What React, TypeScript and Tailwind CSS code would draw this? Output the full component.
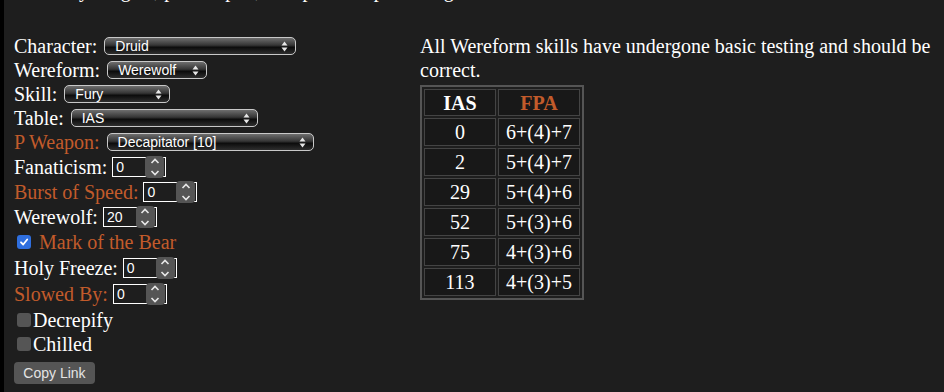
import React from 'react';

const ORANGE = 'text-[#c25b2b]';

function SelectBox({ value, width }: { value: string; width: string }) {
  return (
    <div
      className={`${width} relative flex h-[18px] items-center rounded-[5px] border border-[#c8c8c8] bg-[linear-gradient(to_bottom,#6e6e6e,#353535_45%,#0c0c0c_58%,#2e2e2e)] pl-[10px] font-['Liberation_Sans',sans-serif] text-[14px] leading-none text-white`}
    >
      <span>{value}</span>
      <svg className="absolute right-[7px] top-[3px]" width="7" height="11" viewBox="0 0 7 11">
        <path d="M3.5 0.5 L6.5 4.5 H0.5 Z" fill="#e6e6e6" />
        <path d="M3.5 10.5 L6.5 6.5 H0.5 Z" fill="#e6e6e6" />
      </svg>
    </div>
  );
}

function NumberBox({ value }: { value: string }) {
  return (
    <div className="relative flex h-[20px] w-[54px] items-center border border-white pl-[3px] font-['Liberation_Sans',sans-serif] text-[14px] text-white">
      <span>{value}</span>
      <div className="absolute right-[1px] top-[-2px] flex h-[22px] w-[19px] flex-col items-center justify-between rounded-[4px] bg-[#555555] py-[2px]">
        <svg width="10" height="6" viewBox="0 0 10 6">
          <path d="M1.5 5 L5 1.5 L8.5 5" stroke="#e8e8e8" strokeWidth="1.6" fill="none" />
        </svg>
        <svg width="10" height="6" viewBox="0 0 10 6">
          <path d="M1.5 1 L5 4.5 L8.5 1" stroke="#e8e8e8" strokeWidth="1.6" fill="none" />
        </svg>
      </div>
    </div>
  );
}

function CheckBox({ checked }: { checked: boolean }) {
  return checked ? (
    <div className="flex h-[14px] w-[14px] items-center justify-center rounded-[3px] bg-[#2f6fdf]">
      <svg width="10" height="10" viewBox="0 0 10 10">
        <path d="M2 5.3 L4.2 7.5 L8.2 2.5" stroke="white" strokeWidth="1.8" fill="none" strokeLinecap="round" strokeLinejoin="round" />
      </svg>
    </div>
  ) : (
    <div className="h-[14px] w-[14px] rounded-[3px] bg-[#555555]" />
  );
}

const rows = [
  { ias: '0', fpa: '6+(4)+7' },
  { ias: '2', fpa: '5+(4)+7' },
  { ias: '29', fpa: '5+(4)+6' },
  { ias: '52', fpa: '5+(3)+6' },
  { ias: '75', fpa: '4+(3)+6' },
  { ias: '113', fpa: '4+(3)+5' },
];

export default function App() {
  return (
    <div className="flex h-[392px] w-[944px] overflow-hidden bg-[#1e1e1e] font-['Liberation_Serif',serif] text-[20px] text-white">
      <div className="w-[4px] shrink-0 bg-black" />
      <div className="flex flex-1 flex-col">
        <p className="mt-[-22px] h-[24px] pl-[10px] leading-[24px] whitespace-nowrap">
          Choose your gear, pick a spell, set up the shapeshifting
        </p>

        <div className="mt-[32px] flex">
          {/* left: form */}
          <div className="flex w-[416px] flex-col pl-[10px] leading-none">
            <div className="flex h-[24px] items-center gap-[7px]">
              <span>Character:</span>
              <SelectBox value="Druid" width="w-[192px]" />
            </div>
            <div className="flex h-[24px] items-center gap-[7px]">
              <span>Wereform:</span>
              <SelectBox value="Werewolf" width="w-[100px]" />
            </div>
            <div className="flex h-[24px] items-center gap-[7px]">
              <span>Skill:</span>
              <SelectBox value="Fury" width="w-[106px]" />
            </div>
            <div className="flex h-[24px] items-center gap-[7px]">
              <span>Table:</span>
              <SelectBox value="IAS" width="w-[187px]" />
            </div>
            <div className="flex h-[24px] items-center gap-[7px]">
              <span className={ORANGE}>P Weapon:</span>
              <SelectBox value="Decapitator [10]" width="w-[207px]" />
            </div>
            <div className="flex h-[25px] items-center gap-[5px]">
              <span>Fanaticism:</span>
              <NumberBox value="0" />
            </div>
            <div className="flex h-[25px] items-center gap-[5px]">
              <span className={ORANGE}>Burst of Speed:</span>
              <NumberBox value="0" />
            </div>
            <div className="flex h-[25px] items-center gap-[5px]">
              <span>Werewolf:</span>
              <NumberBox value="20" />
            </div>
            <div className="flex h-[26px] items-center gap-[8px] pl-[3px]">
              <CheckBox checked />
              <span className={ORANGE}>Mark of the Bear</span>
            </div>
            <div className="flex h-[26px] items-center gap-[5px]">
              <span>Holy Freeze:</span>
              <NumberBox value="0" />
            </div>
            <div className="flex h-[26px] items-center gap-[5px]">
              <span className={ORANGE}>Slowed By:</span>
              <NumberBox value="0" />
            </div>
            <div className="flex h-[25px] items-center gap-[2px] pl-[3px]">
              <CheckBox checked={false} />
              <span>Decrepify</span>
            </div>
            <div className="flex h-[24px] items-center gap-[2px] pl-[3px]">
              <CheckBox checked={false} />
              <span>Chilled</span>
            </div>
            <div className="mt-[5px]">
              <button className="h-[22px] w-[81px] rounded-[4px] bg-[#555555] font-['Liberation_Sans',sans-serif] text-[14px] text-[#e4e4e4]">
                Copy Link
              </button>
            </div>
          </div>

          {/* right: info + table */}
          <div className="flex w-[514px] flex-col">
            <p className="leading-[24px]">
              All Wereform skills have undergone basic testing and should be correct.
            </p>
            <table className="mt-[3px] w-[164px] border-separate border-spacing-[2px] border-2 border-[#555555] text-center leading-none">
              <thead>
                <tr>
                  <th className="h-[27px] w-[72px] border border-[#444444] bg-[#181818] font-bold">IAS</th>
                  <th className={`h-[27px] border border-[#444444] bg-[#181818] font-bold ${ORANGE}`}>FPA</th>
                </tr>
              </thead>
              <tbody>
                {rows.map((r) => (
                  <tr key={r.ias}>
                    <td className="h-[28px] border border-[#444444] bg-[#181818]">{r.ias}</td>
                    <td className="h-[28px] border border-[#444444] bg-[#181818]">{r.fpa}</td>
                  </tr>
                ))}
              </tbody>
            </table>
          </div>
        </div>
      </div>
    </div>
  );
}
